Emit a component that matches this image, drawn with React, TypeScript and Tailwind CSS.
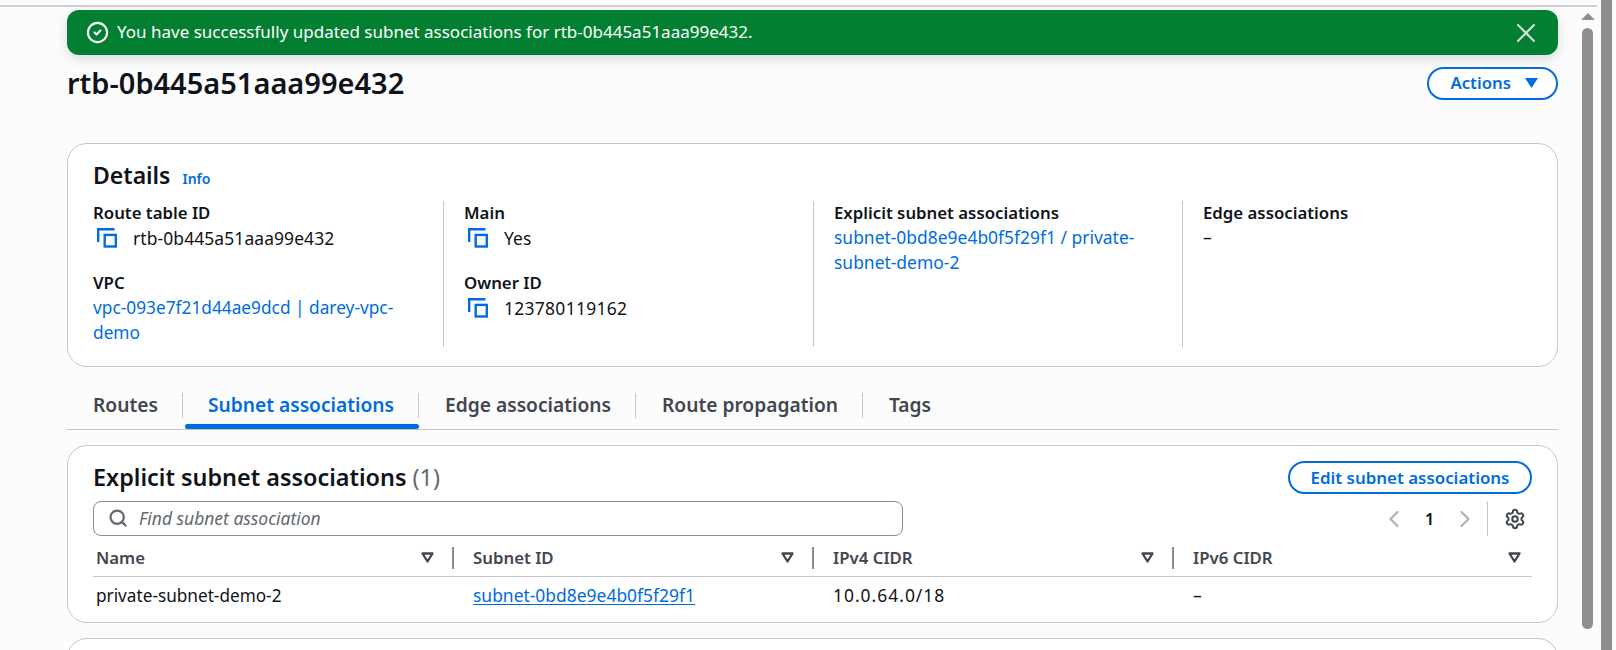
import { Search, Settings, ChevronLeft, ChevronRight, X, CircleCheck } from "lucide-react";

function CopyIcon() {
  return (
    <svg width="20" height="20" viewBox="0 0 20 20" fill="none" stroke="#006ce0" strokeWidth="2.4" className="shrink-0">
      <path d="M1.2 14V1.2h16.3" />
      <rect x="7.7" y="6.9" width="11.1" height="11.6" />
    </svg>
  );
}

function Label({ children }: { children: React.ReactNode }) {
  return <div className="font-semibold text-[#0f141a] text-[16.8px] leading-[24px]">{children}</div>;
}

function CopyValue({ children, spaced }: { children: React.ReactNode; spaced?: boolean }) {
  return (
    <div className="flex items-center h-[24px] mt-[1px] pl-[4px] gap-[16px] text-[#0f141a] text-[17.45px]">
      <CopyIcon />
      <span className={spaced ? "tracking-[0.3px]" : "tracking-[0.1px]"}>{children}</span>
    </div>
  );
}

function FilterArrow() {
  return (
    <svg width="13" height="11" viewBox="0 0 13 11" fill="none" stroke="#424650" strokeWidth="2.3" className="shrink-0">
      <path d="M1.5 1.5h10L6.5 9.5z" strokeLinejoin="round" />
    </svg>
  );
}

function HeadCell({ title, width, inset }: { title: string; width: string; inset?: boolean }) {
  return (
    <div className={`flex items-center ${width}`}>
      <span className={`flex-1 font-semibold text-[#424650] text-[16.8px] ${inset ? "pl-[3px]" : ""}`}>{title}</span>
      <FilterArrow />
      <div className="ml-[18px] mr-[19px] w-[2px] h-[22px] bg-[#8c8c94]" />
    </div>
  );
}

function Tab({ label, active, divider }: { label: string; active?: boolean; divider?: boolean }) {
  return (
    <div className="relative flex items-center h-[25px]">
      <span className={`pr-[24px] font-semibold text-[19.2px] ${active ? "pl-[25px] text-[#006ce0]" : "pl-[26px] text-[#424650]"}`}>{label}</span>
      {divider && <div className="w-px h-[25px] bg-[#c6c6cd]" />}
      {active && <div className="absolute left-[2px] right-0 top-[31px] h-[5px] rounded-full bg-[#006ce0]" />}
    </div>
  );
}

export default function App() {
  return (
    <div className="relative h-[650px] overflow-hidden bg-[#fcfcfd] font-['Noto_Sans',sans-serif]">
      <div className="pt-[5px] pr-[19px]">
        <div className="h-[2px] bg-[#d0d0d6]" />
      </div>

      <div className="w-[1491px] ml-[67px]">
        {/* flash */}
        <div className="mt-[3px] h-[45px] flex items-center rounded-[12px] bg-[#037f31] text-white pl-[19px] pr-[16px] shadow-[0_4px_12px_rgba(0,7,22,0.14)]">
          <CircleCheck size={23} strokeWidth={2.2} className="shrink-0" />
          <span className="ml-[8px] flex-1 text-[17px] pb-[2px]">You have successfully updated subnet associations for rtb-0b445a51aaa99e432.</span>
          <X size={32} strokeWidth={1.5} className="text-[#dedee3]" />
        </div>

        {/* header */}
        <div className="flex items-center justify-between mt-[12px] h-[33px]">
          <h1 className="font-semibold text-[#0f141a] text-[29px] leading-none pb-[2px]">rtb-0b445a51aaa99e432</h1>
          <button className="flex items-center gap-[14px] h-[33px] pl-[21px] pr-[18px] pb-[2px] rounded-full border-2 border-[#006ce0] bg-white text-[#006ce0] font-semibold text-[16.8px]">
            Actions
            <svg width="13" height="10" viewBox="0 0 13 10" fill="#006ce0"><path d="M0 0h13L6.5 10z" /></svg>
          </button>
        </div>

        {/* details */}
        <div className="mt-[43px] h-[224px] rounded-[20px] border border-[#c6c6cd] bg-white pl-[25px] pt-[15px]">
          <div className="flex items-baseline gap-[12px] h-[42px]">
            <span className="font-semibold text-[#0f141a] text-[23px] leading-[32px]">Details</span>
            <span className="font-semibold text-[#006ce0] text-[14px]">Info</span>
          </div>
          <div className="grid grid-cols-[350px_370px_369px_300px] h-[146px]">
            <div>
              <Label>Route table ID</Label>
              <CopyValue>rtb-0b445a51aaa99e432</CopyValue>
              <div className="mt-[21px]"><Label>VPC</Label></div>
              <div className="text-[#006ce0] text-[17.3px] leading-[25px] w-[310px]">vpc-093e7f21d44ae9dcd | darey-vpc-demo</div>
            </div>
            <div className="border-l border-[#c6c6cd] pl-[20px]">
              <Label>Main</Label>
              <CopyValue>Yes</CopyValue>
              <div className="mt-[21px]"><Label>Owner ID</Label></div>
              <CopyValue spaced>123780119162</CopyValue>
            </div>
            <div className="border-l border-[#c6c6cd] pl-[20px]">
              <Label>Explicit subnet associations</Label>
              <div className="text-[#006ce0] text-[17.45px] leading-[25px] w-[310px]">subnet-0bd8e9e4b0f5f29f1 / private-subnet-demo-2</div>
            </div>
            <div className="border-l border-[#c6c6cd] pl-[20px]">
              <Label>Edge associations</Label>
              <div className="text-[#0f141a] text-[17.45px] leading-[25px]">–</div>
            </div>
          </div>
        </div>

        {/* tabs */}
        <div className="mt-[26px] h-[37px] flex border-b border-[#c6c6cd]">
          <div className="flex items-center h-[25px]">
            <span className="pl-[26px] pr-[24px] font-semibold text-[19.2px] text-[#424650]">Routes</span>
            <div className="w-px h-[25px] bg-[#c6c6cd]" />
          </div>
          <Tab label="Subnet associations" active divider />
          <Tab label="Edge associations" divider />
          <Tab label="Route propagation" divider />
          <Tab label="Tags" />
        </div>

        {/* table */}
        <div className="mt-[15px] h-[178px] rounded-[20px] border border-[#c6c6cd] bg-white px-[25px] pt-[15px]">
          <div className="flex items-center justify-between h-[33px]">
            <div className="font-semibold text-[#0f141a] text-[23.4px]">
              Explicit subnet associations <span className="font-normal text-[#656871]">(1)</span>
            </div>
            <button className="w-[244px] h-[33px] rounded-full border-2 border-[#006ce0] text-[#006ce0] font-semibold text-[16.9px]">Edit subnet associations</button>
          </div>
          <div className="flex items-center justify-between mt-[7px] h-[35px]">
            <div className="flex items-center gap-[11px] w-[810px] h-[35px] rounded-[8px] border border-[#8c8c94] pl-[14px] pb-[1px]">
              <Search size={20} strokeWidth={2.7} className="text-[#656871]" />
              <span className="italic text-[#656871] text-[17.45px]">Find subnet association</span>
            </div>
            <div className="flex items-center text-[#b4b4bb] h-[35px]">
              <ChevronLeft size={28} strokeWidth={2} />
              <span className="w-[43px] text-center font-semibold text-[#0f141a] text-[16.8px]">1</span>
              <ChevronRight size={28} strokeWidth={2} />
              <div className="ml-[8px] mr-[16px] w-px h-[35px] bg-[#c6c6cd]" />
              <Settings size={22} strokeWidth={2.2} className="text-[#424650] mr-[6px]" />
            </div>
          </div>
          <div className="flex items-center h-[41px] pt-[3px] border-b border-[#c6c6cd]">
            <HeadCell title="Name" width="w-[380px]" inset />
            <HeadCell title="Subnet ID" width="w-[360px]" />
            <HeadCell title="IPv4 CIDR" width="w-[360px]" />
            <div className="flex-1 flex items-center">
              <span className="flex-1 font-semibold text-[#424650] text-[16.8px]">IPv6 CIDR</span>
              <div className="mr-[11px]"><FilterArrow /></div>
            </div>
          </div>
          <div className="flex items-center h-[37px] text-[#0f141a] text-[17.45px]">
            <div className="w-[380px] pl-[3px] text-[17.2px]">private-subnet-demo-2</div>
            <div className="w-[360px]"><span className="text-[#006ce0] underline underline-offset-2">subnet-0bd8e9e4b0f5f29f1</span></div>
            <div className="w-[360px] tracking-[1px]">10.0.64.0/18</div>
            <div>–</div>
          </div>
        </div>

        {/* next card */}
        <div className="mt-[15px] h-[60px] rounded-[20px] border border-[#c6c6cd] bg-white" />
      </div>

      {/* scrollbars */}
      <div className="absolute left-[1581px] top-[13px] w-0 h-0 border-x-[7px] border-x-transparent border-b-[7px] border-b-[#8e8e8e]" />
      <div className="absolute left-[1582px] top-[28px] w-[11px] h-[601px] rounded-full bg-[#8e8e8e]" />
      <div className="absolute left-[1601px] top-0 bottom-0 w-[11px] bg-[#8e8e8e]" />
    </div>
  );
}
